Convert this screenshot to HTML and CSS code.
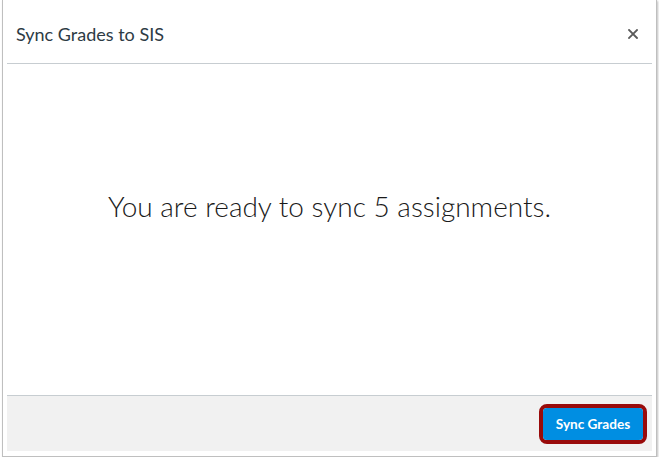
FILE: index.html
```html
<!DOCTYPE html>
<html lang="en">
<head>
<meta charset="utf-8">
<title>Sync Grades to SIS</title>
<link rel="stylesheet" href="styles.css">
</head>
<body>
<div class="dialog">
  <div class="dialog-inner">
    <header class="dialog-header">
      <h1 class="dialog-title">Sync Grades to SIS</h1>
      <button class="close-btn" aria-label="Close">
        <svg width="10" height="10" viewBox="0 0 10 10"><path d="M1 1 L9 9 M9 1 L1 9" stroke="#5a5a5a" stroke-width="1.8" stroke-linecap="square"/></svg>
      </button>
    </header>
    <main class="dialog-body">
      <p class="message">You are ready to sync 5 assignments.</p>
    </main>
    <footer class="dialog-footer">
      <span class="highlight"><button class="primary-btn">Sync Grades</button></span>
    </footer>
  </div>
</div>
</body>
</html>
```
FILE: styles.css
```css
* { box-sizing: border-box; }
html, body { margin: 0; padding: 0; background: #ffffff; }
body { font-family: Lato, "Open Sans", sans-serif; }

.dialog {
  margin-left: 2px;
  width: 655px;
  height: 457px;
  background: #fff;
  border: 1px solid #bfbfbf;
  border-top: none;
  box-shadow: 1px 1px 2px rgba(0,0,0,0.25);
}
.dialog-inner {
  display: flex;
  flex-direction: column;
  height: 100%;
  padding: 0 4px 5px 4px;
}
.dialog-header {
  height: 64px;
  flex: none;
  display: flex;
  align-items: center;
  justify-content: space-between;
  border-bottom: 1px solid #c7cdd1;
  padding: 0 14px 0 9px;
}
.dialog-title {
  margin: 0;
  font-size: 18px;
  font-weight: 400;
  line-height: 24px;
  color: #2d3b45;
  padding-top: 5px;
}
.close-btn {
  border: none;
  background: none;
  padding: 0;
  width: 10px;
  height: 10px;
  display: flex;
  margin-top: 5px;
}
.dialog-body {
  flex: 1;
  padding-top: 122px;
  text-align: center;
}
.message {
  margin: 0;
  font-size: 28px;
  font-weight: 300;
  line-height: 40px;
  color: #1a1a1a;
}
.dialog-footer {
  height: 56px;
  flex: none;
  background: #f1f1f1;
  border-top: 1px solid #c7cdd1;
  display: flex;
  align-items: center;
  justify-content: flex-end;
  padding-right: 5px;
}
.highlight {
  display: inline-flex;
  border: 4px solid #990b0b;
  border-radius: 8px;
}
.primary-btn {
  width: 100px;
  height: 32px;
  border: none;
  border-radius: 4px;
  background: #008ee2;
  color: #fff;
  font-family: Lato, "Open Sans", sans-serif;
  font-size: 13.6px;
  font-weight: 700;
  padding: 0;
}
```
